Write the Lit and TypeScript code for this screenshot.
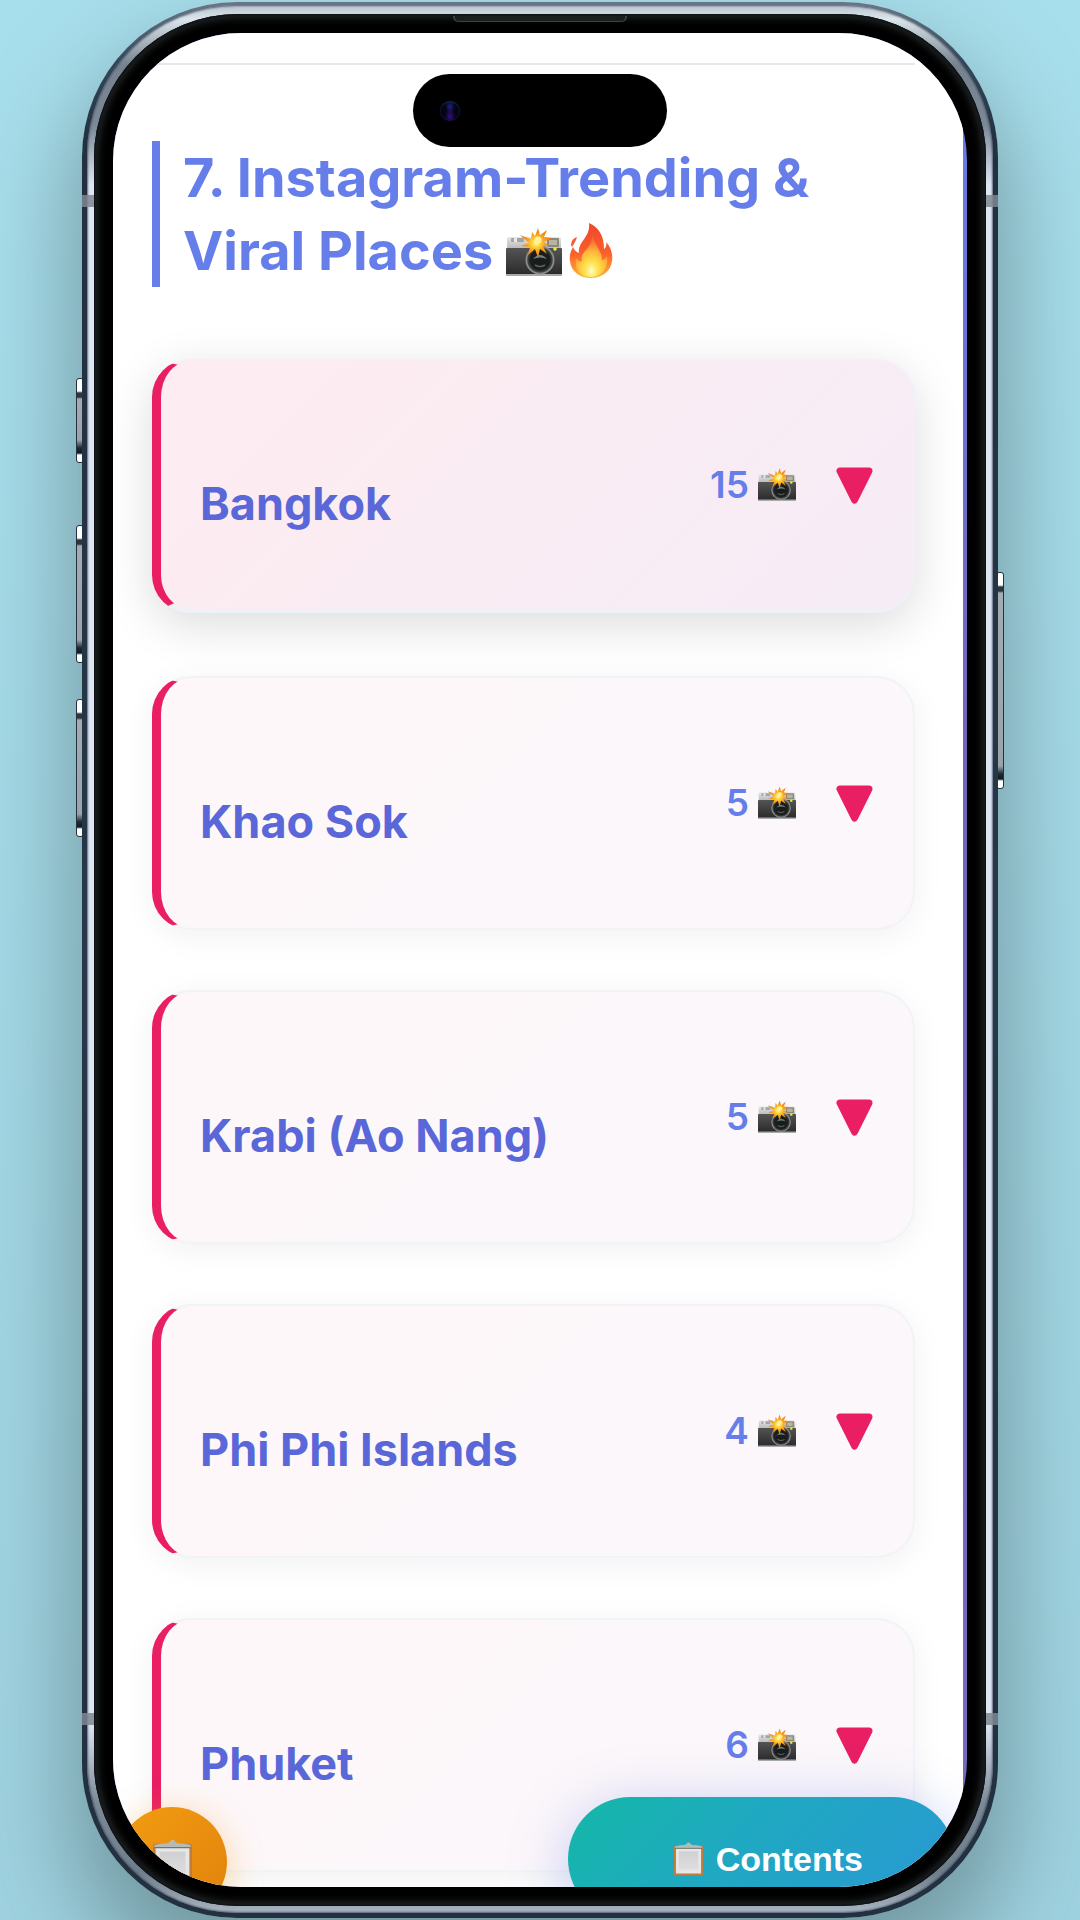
import { LitElement, html, css, svg } from "lit";
import { customElement, property } from "lit/decorators.js";

interface Place {
  name: string;
  count: number;
  active?: boolean;
}

const PLACES: Place[] = [
  { name: "Bangkok", count: 15, active: true },
  { name: "Khao Sok", count: 5 },
  { name: "Krabi (Ao Nang)", count: 5 },
  { name: "Phi Phi Islands", count: 4 },
  { name: "Phuket", count: 6 },
];

const cameraArt = svg`
  <defs>
    <linearGradient id="silver" x1="0" y1="0" x2="0" y2="1">
      <stop offset="0" stop-color="#e4e5e4" /><stop offset="1" stop-color="#b4b6b5" />
    </linearGradient>
    <linearGradient id="leather" x1="0" y1="0" x2="0" y2="1">
      <stop offset="0" stop-color="#545454" /><stop offset="1" stop-color="#2a2a2a" />
    </linearGradient>
    <radialGradient id="lens">
      <stop offset="0" stop-color="#1a211f" /><stop offset=".62" stop-color="#2d3433" />
      <stop offset=".72" stop-color="#161616" /><stop offset="1" stop-color="#4c4d4d" />
    </radialGradient>
    <radialGradient id="flash">
      <stop offset="0" stop-color="#fffbc0" /><stop offset=".25" stop-color="#ffd83d" />
      <stop offset=".55" stop-color="#fba31c" /><stop offset="1" stop-color="#e8781a" />
    </radialGradient>
  </defs>
  <path d="M1 10q0-2 2-2h50q2 0 2 2v11H1z" fill="url(#silver)" />
  <rect x="5" y="9" width="13" height="4" rx="1" fill="#a3a5a5" />
  <rect x="8" y="9" width="3" height="4" fill="#e9e9e9" />
  <rect x="41" y="9" width="12" height="9" rx="1" fill="#8b887c" />
  <rect x="43" y="11" width="8" height="5" fill="#b9b4a2" />
  <rect x="0" y="19" width="56" height="27" rx="1" fill="url(#leather)" />
  <rect x="0" y="45" width="56" height="2" rx="1" fill="#a9abab" />
  <circle cx="34" cy="31" r="14.500" fill="#8a8c8c" />
  <circle cx="34" cy="31" r="12.800" fill="url(#lens)" />
  <circle cx="34" cy="31" r="8.500" fill="#171d1c" />
  <path d="M27 30q7-8 14 0q-7-3-14 0z" fill="#76807d" />
  <path d="M29 36q5 3 10 0" stroke="#59615e" stroke-width="1.500" fill="none" />
  <circle cx="49" cy="20" r="1.800" fill="#e6ee3c" />
  <path d="M32 -1l2 7 7-5-3 7 8 1-8 4 5 4-6 0 4 8-7-5-2 9-3-9-7 6 2-8-9-1 8-3-9-8 11 4 1-7 3 4z" fill="url(#flash)" />
  <circle cx="32" cy="11" r="3.500" fill="#fff29a" />`;

const fireArt = svg`
  <defs>
    <linearGradient id="flameOuter" x1="0" y1="0" x2="0" y2="1">
      <stop offset="0" stop-color="#f0462c" /><stop offset=".55" stop-color="#fb5f2b" />
      <stop offset=".85" stop-color="#fd9a2e" /><stop offset="1" stop-color="#fbbd3b" />
    </linearGradient>
    <radialGradient id="flameInner" cx=".5" cy=".85" r=".75">
      <stop offset="0" stop-color="#fffbc0" /><stop offset=".3" stop-color="#ffe24a" />
      <stop offset=".65" stop-color="#ffb23a" /><stop offset="1" stop-color="#fb7a3a" stop-opacity=".5" />
    </radialGradient>
  </defs>
  <path d="M20 0C31 5 35 14 35 26C37 25 38 22 37 19C42 24 44 31 43 38C42 48 33 55 22 55C10 55 2 48 1 38C0 32 2 28 4 24C5 27 7 29 10 30C8 19 22 14 20 0Z" fill="url(#flameOuter)" />
  <path d="M2 22Q2 16 8 14Q7 18 3 24z" fill="#fb5a34" />
  <path d="M23 12C27 24 33 28 33 37C35 37 37 35 38 33C40 45 32 54 22 54C11 54 5 47 7 35C9 38 11 39 13 38C10 28 24 26 23 12Z" fill="url(#flameInner)" />`;

const clipboardArt = svg`
  <defs>
    <linearGradient id="paper" x1="0" y1="0" x2="0" y2="1">
      <stop offset="0" stop-color="#cfd0d1" /><stop offset="1" stop-color="#dededf" />
    </linearGradient>
  </defs>
  <rect x="0" y="3" width="30" height="31" rx="1.500" fill="#c07c3c" />
  <rect x="2" y="5" width="26" height="27" fill="#e6e6e5" />
  <rect x="5" y="9" width="20" height="19" fill="url(#paper)" />
  <path d="M1 6V4q5-1.500 10-1.500Q13 2 14 0h2q1 2 3 2.500 5 0 10 1.500v2z" fill="#b3bab7" />
  <path d="M1 6h28" stroke="#6f7572" stroke-width="1" />`;

@customElement("emoji-art")
export class EmojiArt extends LitElement {
  @property() kind: "camera" | "fire" | "clipboard" = "camera";

  static styles = css`
    :host { display: inline-block; line-height: 0; }
    .art { display: block; width: 100%; height: 100%; overflow: visible; }
  `;

  render() {
    if (this.kind === "fire")
      return html`<svg class="art" viewBox="0 0 44 56" role="img" aria-label="Fire">${fireArt}</svg>`;
    if (this.kind === "clipboard")
      return html`<svg class="art" viewBox="0 0 30 34" role="img" aria-label="Clipboard">${clipboardArt}</svg>`;
    return html`<svg class="art" viewBox="0 0 56 47" role="img" aria-label="Camera with flash">${cameraArt}</svg>`;
  }
}

@customElement("place-card")
export class PlaceCard extends LitElement {
  @property({ attribute: false }) place!: Place;

  static styles = css`
    :host { display: block; }
    .card {
      box-sizing: border-box;
      width: 100%;
      min-height: 254px;
      display: flex;
      align-items: center;
      gap: 40px;
      padding: 0 40px 0 39px;
      margin: 0;
      border: 2px solid #f1f4f7;
      border-left: 9px solid #e91e63;
      border-radius: 38px;
      background: linear-gradient(135deg, #fef7f9, #fbf7fb) padding-box, #f1f4f7 border-box;
      box-shadow: 0 6px 32px rgba(0, 0, 0, 0.06);
      font-family: Inter, "Liberation Sans", sans-serif;
      text-align: left;
      cursor: pointer;
    }
    .card.active {
      background: linear-gradient(135deg, #feecf1, #f6ecf6) padding-box, #eef1f7 border-box;
      border-top-color: #f9eef4;
      border-right-color: #f3eff7;
      border-bottom: 4px solid #eef1f7;
      box-shadow: 0 12px 48px rgba(0, 0, 0, 0.14);
      transform: translateY(-3px);
    }
    .name {
      flex: 1;
      margin-top: 37px;
      font-size: 45px;
      line-height: 60px;
      font-weight: 700;
      color: #5a67d8;
    }
    .count {
      display: flex;
      align-items: center;
      gap: 9px;
      font-size: 37px;
      line-height: 44px;
      font-weight: 600;
      color: #667eea;
    }
    .icon { width: 38px; height: 32px; }
    .arrow { width: 37px; height: 37px; display: block; }
  `;

  render() {
    const { name, count, active } = this.place;
    return html`
      <button class="card ${active ? "active" : ""}" type="button" aria-expanded="false">
        <span class="name">${name}</span>
        <span class="count">${count}<emoji-art class="icon" kind="camera"></emoji-art></span>
        <svg class="arrow" viewBox="0 0 37 37" aria-hidden="true">
          <path d="M4 4H33L18.500 33Z" fill="#e91e63" stroke="#e91e63" stroke-width="7" stroke-linejoin="round" />
        </svg>
      </button>`;
  }
}

@customElement("app-root")
export class AppRoot extends LitElement {
  static styles = css`
    :host {
      display: flex;
      box-sizing: border-box;
      height: 100vh;
      padding: 2px 82px;
      overflow: hidden;
      background: linear-gradient(#a8dfec, #9fd2e0);
      font-family: Inter, "Liberation Sans", sans-serif;
    }
    .phone {
      position: relative;
      flex: 1;
      display: flex;
      min-width: 0;
      border-radius: 155px;
      box-shadow: 0 50px 90px 12px rgba(92, 124, 130, 0.66);
    }
    .rim, .metal, .bezel { flex: 1; display: flex; min-width: 0; box-sizing: border-box; }
    .rim {
      position: relative;
      padding: 3px 5px 5px;
      border-radius: 155px;
      background: linear-gradient(#6a7686, #34485a 60px, #22303f 140px, #263849 50%, #22303f);
    }
    .metal {
      padding: 9px 7px 7px;
      border-radius: 150px;
      background: linear-gradient(#b9c3cf, #dbe5ea 14px, #76828f 60px, #7b8896 120px, #dfe6f3 180px, #dfe6f3 calc(100% - 190px), #7b8997 calc(100% - 110px), #6f7e8c calc(100% - 40px), #a9b5c0);
      box-shadow: inset 0 0 2px 1px rgba(60, 75, 95, 0.8);
    }
    .bezel {
      padding: 19px;
      border-radius: 144px;
      background: #000;
      box-shadow: inset 0 0 2px 1px #0a0d10, inset 0 0 9px 3px #2b3032;
    }
    .screen {
      position: relative;
      flex: 1;
      min-width: 0;
      overflow: hidden;
      border-radius: 128px;
      padding-right: 4px;
      background: linear-gradient(#667eea, #7563b8 40%, #7a68c0);
    }
    .page {
      box-sizing: border-box;
      min-height: 100%;
      padding: 30px 48px 62px 39px;
      background: #fff;
    }
    .section { padding-top: 76px; border-top: 2px solid #e6e9ec; }
    .title {
      margin: 0 0 75px;
      padding-left: 23px;
      border-left: 8px solid #667eea;
      font-size: 54px;
      line-height: 73px;
      font-weight: 700;
      color: #667eea;
    }
    .title-camera { width: 56px; height: 47px; vertical-align: -6px; }
    .title-fire { width: 44px; height: 56px; margin-left: 7px; vertical-align: -9px; }
    .list { display: flex; flex-direction: column; gap: 60px; margin: 0; padding: 0; list-style: none; }

    .speaker {
      position: absolute;
      top: 14px;
      left: 50%;
      width: 174px;
      height: 6px;
      transform: translateX(-50%);
      box-sizing: border-box;
      border: solid #3c4142;
      border-width: 0 2px 1px;
      border-radius: 0 0 5px 5px;
      background: #1a1f20;
    }
    .island {
      position: absolute;
      top: 41px;
      left: 50%;
      width: 254px;
      height: 73px;
      transform: translateX(-50%);
      border-radius: 37px;
      background: #000;
    }
    .lens {
      position: absolute;
      top: 27px;
      left: 27px;
      width: 20px;
      height: 20px;
      border-radius: 50%;
      background:
        radial-gradient(ellipse at 50% 28%, #1d1f8c 0, transparent 34%),
        radial-gradient(ellipse at 50% 78%, #331080 0, transparent 36%),
        #050512;
      box-shadow: inset 0 1px 1px #0d3a4a, inset 0 -1px 1px #2c0a4e, 0 0 2px #0c1030;
    }
    .side {
      position: absolute;
      width: 8px;
      border-radius: 3px;
      box-sizing: border-box;
      border: 1px solid #25313c;
      background: linear-gradient(#fff 12px, #2c3640 14px, #2c3640 18px, #a4acb2 20px, #9aa3aa calc(100% - 22px), #1d2832 calc(100% - 14px), #0f1a22 calc(100% - 9px), #fff calc(100% - 7px));
    }
    .left { left: -6px; }
    .right { right: -6px; }
    .action { top: 376px; height: 85px; }
    .volume-up { top: 523px; height: 138px; }
    .volume-down { top: 697px; height: 138px; }
    .power { top: 570px; height: 217px; }
    .antenna { position: absolute; width: 12px; height: 12px; background: #7f8791; opacity: 0.85; }
    .start { left: 0; }
    .end { right: 0; }
    .upper { top: 193px; }
    .lower { bottom: 193px; }

    .fab {
      position: absolute;
      display: flex;
      align-items: center;
      justify-content: center;
      padding: 0;
      border: 0;
      cursor: pointer;
    }
    .round {
      left: 4px;
      bottom: -30px;
      width: 110px;
      height: 110px;
      border-radius: 50%;
      background: linear-gradient(135deg, #f39c12, #e0820c);
      box-shadow: 0 8px 36px rgba(243, 156, 18, 0.4);
    }
    .round-icon { width: 39px; height: 46px; }
    .pill {
      right: 12px;
      bottom: -34px;
      height: 124px;
      padding: 0 92px 0 106px;
      gap: 13px;
      border-radius: 62px;
      background: linear-gradient(135deg, #14b8a6, #1fa9c1 40%, #2a97d6);
      box-shadow: 0 12px 60px rgba(102, 126, 234, 0.4);
      color: #fff;
      font: 700 34px/40px "Liberation Sans", Arial, sans-serif;
    }
    .pill-icon { width: 29px; height: 34px; }
  `;

  render() {
    return html`
      <div class="phone">
        <span class="side left action"></span>
        <span class="side left volume-up"></span>
        <span class="side left volume-down"></span>
        <span class="side right power"></span>
        <div class="rim">
          <div class="metal">
            <div class="bezel">
              <div class="screen">
                <main class="page">
                  <section class="section">
                    <h2 class="title">7. Instagram-Trending &amp; Viral Places <emoji-art class="title-camera" kind="camera"></emoji-art><emoji-art class="title-fire" kind="fire"></emoji-art></h2>
                    <ul class="list">
                      ${PLACES.map((place) => html`<li><place-card .place=${place}></place-card></li>`)}
                    </ul>
                  </section>
                </main>
                <button class="fab round" type="button" aria-label="Checklist">
                  <emoji-art class="round-icon" kind="clipboard"></emoji-art>
                </button>
                <button class="fab pill" type="button">
                  <emoji-art class="pill-icon" kind="clipboard"></emoji-art>Contents
                </button>
                <div class="island"><span class="lens"></span></div>
              </div>
            </div>
          </div>
          <span class="speaker"></span>
          <span class="antenna start upper"></span>
          <span class="antenna start lower"></span>
          <span class="antenna end upper"></span>
          <span class="antenna end lower"></span>
        </div>
      </div>`;
  }
}
